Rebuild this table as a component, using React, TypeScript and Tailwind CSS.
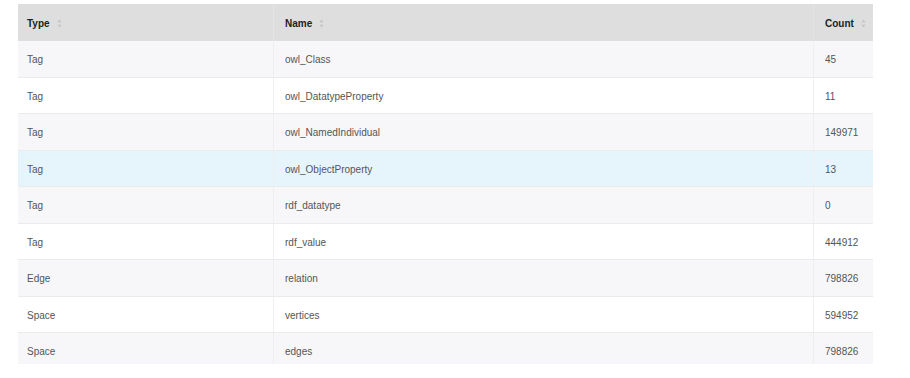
import React from "react";

const rows: [string, string, string][] = [
  ["Tag", "owl_Class", "45"],
  ["Tag", "owl_DatatypeProperty", "11"],
  ["Tag", "owl_NamedIndividual", "149971"],
  ["Tag", "owl_ObjectProperty", "13"],
  ["Tag", "rdf_datatype", "0"],
  ["Tag", "rdf_value", "444912"],
  ["Edge", "relation", "798826"],
  ["Space", "vertices", "594952"],
  ["Space", "edges", "798826"],
];

function SortIcon() {
  return (
    <svg width="5" height="9" viewBox="0 0 5 9" className="ml-[7px] shrink-0">
      <path d="M2.5 0.5 L4.5 3.3 L0.5 3.3 Z" fill="#c4c4c4" />
      <path d="M2.5 8.5 L4.5 5.7 L0.5 5.7 Z" fill="#c4c4c4" />
    </svg>
  );
}

export default function App() {
  return (
    <div
      className="w-[910px] h-[378px] bg-white pt-[4px] pl-[18px]"
      style={{ fontFamily: "'Liberation Sans', Arial, sans-serif" }}
    >
      <div className="w-[855px] h-[360px] overflow-hidden text-[10px] text-[#555555]">
        <div className="grid grid-cols-[256px_540px_59px] h-[37px] bg-[#dedede]">
          <div className="flex items-center pl-[9px] pt-[1px] font-semibold text-[#222222] border-r border-[#e4e4e4]">
            Type
            <SortIcon />
          </div>
          <div className="flex items-center pl-[11px] pt-[1px] font-semibold text-[#222222] border-r border-[#e4e4e4]">
            Name
            <SortIcon />
          </div>
          <div className="flex items-center pl-[11px] pt-[1px] font-semibold text-[#222222]">
            Count
            <SortIcon />
          </div>
        </div>
        {rows.map((r, i) => {
          const bg = i === 3 ? "bg-[#e6f5fc]" : i % 2 === 0 ? "bg-[#f7f7f9]" : "bg-white";
          return (
            <div
              key={i}
              className={`grid grid-cols-[256px_540px_59px] h-[36.5px] border-b border-[#ebebeb] ${bg}`}
            >
              <div className="flex items-center pl-[9px] pt-[2px] border-r border-[#efefef]">{r[0]}</div>
              <div className="flex items-center pl-[11px] pt-[2px] border-r border-[#efefef]">{r[1]}</div>
              <div className="flex items-center pl-[11px] pt-[2px]">{r[2]}</div>
            </div>
          );
        })}
      </div>
    </div>
  );
}
